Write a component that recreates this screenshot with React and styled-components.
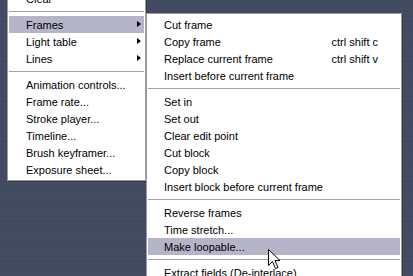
import React from "react";
import styled, { createGlobalStyle } from "styled-components";

const mainItems = [
  { label: "Clear" },
  { sep: true },
  { label: "Frames", sub: true, active: true },
  { label: "Light table", sub: true },
  { label: "Lines", sub: true },
  { sep: true },
  { label: "Animation controls..." },
  { label: "Frame rate..." },
  { label: "Stroke player..." },
  { label: "Timeline..." },
  { label: "Brush keyframer..." },
  { label: "Exposure sheet..." },
];

const frameItems = [
  { label: "Cut frame" },
  { label: "Copy frame", keys: "ctrl shift c" },
  { label: "Replace current frame", keys: "ctrl shift v" },
  { label: "Insert before current frame" },
  { sep: true },
  { label: "Set in" },
  { label: "Set out" },
  { label: "Clear edit point" },
  { label: "Cut block" },
  { label: "Copy block" },
  { label: "Insert block before current frame" },
  { sep: true },
  { label: "Reverse frames" },
  { label: "Time stretch..." },
  { label: "Make loopable...", active: true },
  { sep: true },
  { label: "Extract fields (De-interlace)" },
];

const MenuList = ({ items, textLeft }) =>
  items.map((item, i) =>
    item.sep ? (
      <Separator key={i} />
    ) : (
      <Item key={i} $active={item.active} $textLeft={textLeft}>
        <span>{item.label}</span>
        {item.keys && <Keys>{item.keys}</Keys>}
        {item.sub && <SubArrow />}
      </Item>
    )
  );

const App = () => {
  return (
    <>
      <GlobalStyle />
      <Desktop>
        <Menu $offset={-13} $width={139}>
          <MenuList items={mainItems} textLeft={17} />
        </Menu>
        <Menu $offset={13} $width={256}>
          <MenuList items={frameItems} textLeft={16} />
        </Menu>
        <Pointer width="13" height="21" viewBox="0 0 13 21">
          <path
            d="M0.5 0.5 L0.5 16.5 L4.5 12.5 L7.5 19.5 L10 18.5 L7 11.5 L12 11.5 Z"
            fill="#fff"
            stroke="#000"
            strokeWidth="1"
          />
        </Pointer>
      </Desktop>
    </>
  );
};

// Styled components
const GlobalStyle = createGlobalStyle`
  body {
    margin: 0;
    background: #414a60;
    font-family: "Liberation Sans", Arial, sans-serif;
  }
`;

const Desktop = styled.div`
  position: relative;
  width: 413px;
  height: 276px;
  overflow: hidden;
  display: flex;
  align-items: flex-start;
  padding-left: 7px;
  box-sizing: border-box;
  background: repeating-linear-gradient(
    180deg,
    #434c63 0px,
    #3e485d 2px,
    #454e65 3px,
    #3f495e 5px
  );
`;

const Menu = styled.div`
  flex: none;
  margin-top: ${(p) => p.$offset}px;
  width: ${(p) => p.$width}px;
  box-sizing: border-box;
  background: #fff;
  border: 1px solid #9c9c9c;
  padding: 2px 0;
  display: flex;
  flex-direction: column;
  box-shadow: 1px 1px 0 rgba(0, 0, 0, 0.25);
`;

const Item = styled.div`
  height: 17px;
  display: flex;
  align-items: center;
  padding: 0 22px 0 ${(p) => p.$textLeft}px;
  margin: 0 1px;
  font-size: 11px;
  color: #000;
  white-space: nowrap;
  background: ${(p) => (p.$active ? "#b6b4c8" : "transparent")};
  position: relative;
`;

const Keys = styled.span`
  margin-left: auto;
`;

const SubArrow = styled.span`
  position: absolute;
  right: 3px;
  top: 5px;
  width: 0;
  height: 0;
  border-top: 3.5px solid transparent;
  border-bottom: 3.5px solid transparent;
  border-left: 4px solid #000;
`;

const Separator = styled.div`
  height: 9px;
  display: flex;
  align-items: center;
  margin: 0 1px;
  &::after {
    content: "";
    flex: 1;
    height: 1px;
    background: #a3a3a3;
  }
`;

const Pointer = styled.svg`
  position: absolute;
  left: 268px;
  top: 249px;
`;

export default App;
